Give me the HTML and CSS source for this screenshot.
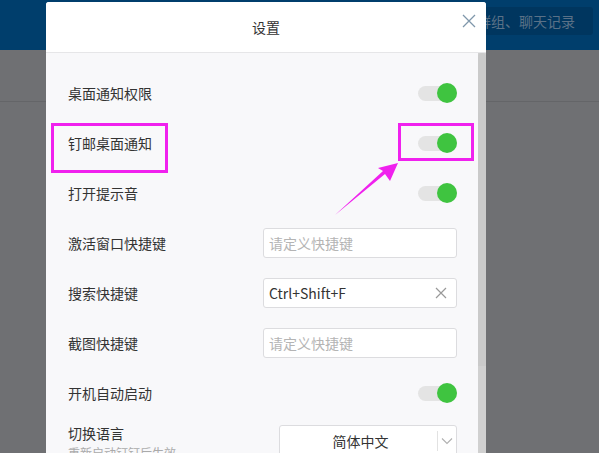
FILE: index.html
```html
<!DOCTYPE html>
<html lang="zh-CN">
<head>
    <meta charset="UTF-8">
    <meta name="viewport" content="width=device-width, initial-scale=1.0">
    <title>设置</title>
    <link rel="stylesheet" href="styles.css">
</head>
<body>

    <!-- Fenêtre principale derrière le masque -->
    <div class="app">
        <header class="topbar">
            <div class="search">搜索联系人、群组、聊天记录</div>
        </header>
        <div class="main">
            <div class="main-head"></div>
        </div>
    </div>

    <!-- Boîte de dialogue des réglages -->
    <div class="dialog">
        <div class="dialog-head">
            <span class="dialog-title">设置</span>
            <button class="close" aria-label="关闭">
                <svg width="14" height="14" viewBox="0 0 14 14"><path d="M1 1L13 13M13 1L1 13" stroke="#7f97ab" stroke-width="1.3" fill="none"/></svg>
            </button>
        </div>
        <div class="dialog-body">
            <div class="settings">
                <div class="row">
                    <span class="label">桌面通知权限</span>
                    <span class="toggle"><span class="knob"></span></span>
                </div>
                <div class="row">
                    <span class="label">钉邮桌面通知</span>
                    <span class="toggle"><span class="knob"></span></span>
                </div>
                <div class="row">
                    <span class="label">打开提示音</span>
                    <span class="toggle"><span class="knob"></span></span>
                </div>
                <div class="row">
                    <span class="label">激活窗口快捷键</span>
                    <div class="field"><span class="placeholder">请定义快捷键</span></div>
                </div>
                <div class="row">
                    <span class="label">搜索快捷键</span>
                    <div class="field">
                        <span class="value">Ctrl+Shift+F</span>
                        <svg class="clear" width="12" height="12" viewBox="0 0 12 12"><path d="M1 1L11 11M11 1L1 11" stroke="#999" stroke-width="1.2" fill="none"/></svg>
                    </div>
                </div>
                <div class="row">
                    <span class="label">截图快捷键</span>
                    <div class="field"><span class="placeholder">请定义快捷键</span></div>
                </div>
                <div class="row">
                    <span class="label">开机自动启动</span>
                    <span class="toggle"><span class="knob"></span></span>
                </div>
                <div class="row row-top">
                    <div>
                        <div class="label">切换语言</div>
                        <div class="hint">重新启动钉钉后生效</div>
                    </div>
                    <div class="select">
                        <span class="select-value">简体中文</span>
                        <span class="select-arrow">
                            <svg width="12" height="8" viewBox="0 0 12 8"><path d="M1 1.5L6 6.5L11 1.5" stroke="#b0b0b0" stroke-width="1.1" fill="none"/></svg>
                        </span>
                    </div>
                </div>
            </div>
            <div class="scrollbar"><div class="thumb"></div></div>
        </div>
    </div>

    <!-- Annotations -->
    <div class="mark mark-label"></div>
    <div class="mark mark-toggle"></div>
    <svg class="arrow" width="599" height="453" viewBox="0 0 599 453">
        <polygon points="335,215 385,174 390,181 398,163 378,168 383,171" fill="#f021ee"/>
    </svg>

</body>
</html>
```

FILE: styles.css
```css
html, body {
    margin: 0;
    width: 599px;
    height: 453px;
    overflow: hidden;
    font-family: "Noto Sans CJK SC", "Noto Sans", sans-serif;
}
.app { height: 453px; display: flex; flex-direction: column; }
.topbar {
    height: 50px;
    background-color: #003e6c;
    display: flex;
    justify-content: flex-end;
    align-items: flex-start;
    padding: 7px 6px 0 0;
    box-sizing: border-box;
}
.search {
    width: 220px;
    height: 28px;
    line-height: 28px;
    background-color: #00365f;
    border-radius: 3px;
    color: #5a7187;
    font-size: 14px;
    text-align: right;
    padding-right: 18px;
    box-sizing: border-box;
    white-space: nowrap;
    overflow: hidden;
}
.main { flex: 1; background-color: #6f7073; }
.main-head { height: 51px; border-bottom: 1px solid #646568; }

.dialog {
    position: absolute;
    left: 46px;
    top: 2px;
    width: 440px;
    height: 451px;
    display: flex;
    flex-direction: column;
    background-color: #f8f8fa;
    border-radius: 3px 3px 0 0;
    overflow: hidden;
}
.dialog-head {
    height: 50px;
    flex: none;
    background-color: white;
    border-bottom: 1px solid #e6e6e8;
    display: flex;
    align-items: center;
    justify-content: center;
    position: relative;
}
.dialog-title { font-size: 14px; color: #333; }
.close {
    position: absolute;
    right: 10px;
    top: 12px;
    border: none;
    background: none;
    padding: 0;
    width: 14px;
    height: 14px;
}
.dialog-body { flex: 1; display: flex; }
.settings { flex: 1; padding: 15px 21px 0 22px; }
.scrollbar { width: 8px; background-color: #d0d0d0; }
.thumb { height: 313px; background-color: #cacaca; border-radius: 4px 4px 0 0; }

.row { height: 50px; display: flex; align-items: center; justify-content: space-between; }
.row-top { align-items: flex-start; padding-top: 5px; box-sizing: border-box; }
.label { font-size: 14px; color: #333; }
.hint { font-size: 12px; color: #aaa; margin-top: 1px; }

.toggle {
    width: 39px;
    height: 15px;
    border-radius: 8px;
    background-color: #e4e4e4;
    display: flex;
    justify-content: flex-end;
    align-items: center;
}
.knob { width: 20px; height: 20px; border-radius: 50%; background-color: #3fc440; }

.field {
    width: 194px;
    height: 30px;
    box-sizing: border-box;
    border: 1px solid #dcdcdf;
    border-radius: 3px;
    background-color: white;
    display: flex;
    align-items: center;
    justify-content: space-between;
    padding: 0 9px 0 5px;
    font-size: 14px;
}
.placeholder { color: #b4b4b4; }
.value { color: #333; }

.select {
    width: 178px;
    height: 32px;
    margin-top: 2px;
    box-sizing: border-box;
    border: 1px solid #dcdcdf;
    border-radius: 3px;
    background-color: white;
    display: flex;
    align-items: center;
}
.select-value { flex: 1; text-align: center; font-size: 14px; color: #333; padding-left: 4px; }
.select-arrow {
    width: 18px;
    height: 20px;
    border-left: 1px solid #e2e2e2;
    display: flex;
    align-items: center;
    justify-content: center;
}

.mark { position: absolute; border: 3px solid #f021ee; box-sizing: border-box; }
.mark-label { left: 51px; top: 123px; width: 117px; height: 50px; }
.mark-toggle { left: 398px; top: 123px; width: 76px; height: 38px; }
.arrow { position: absolute; left: 0; top: 0; pointer-events: none; }
```
